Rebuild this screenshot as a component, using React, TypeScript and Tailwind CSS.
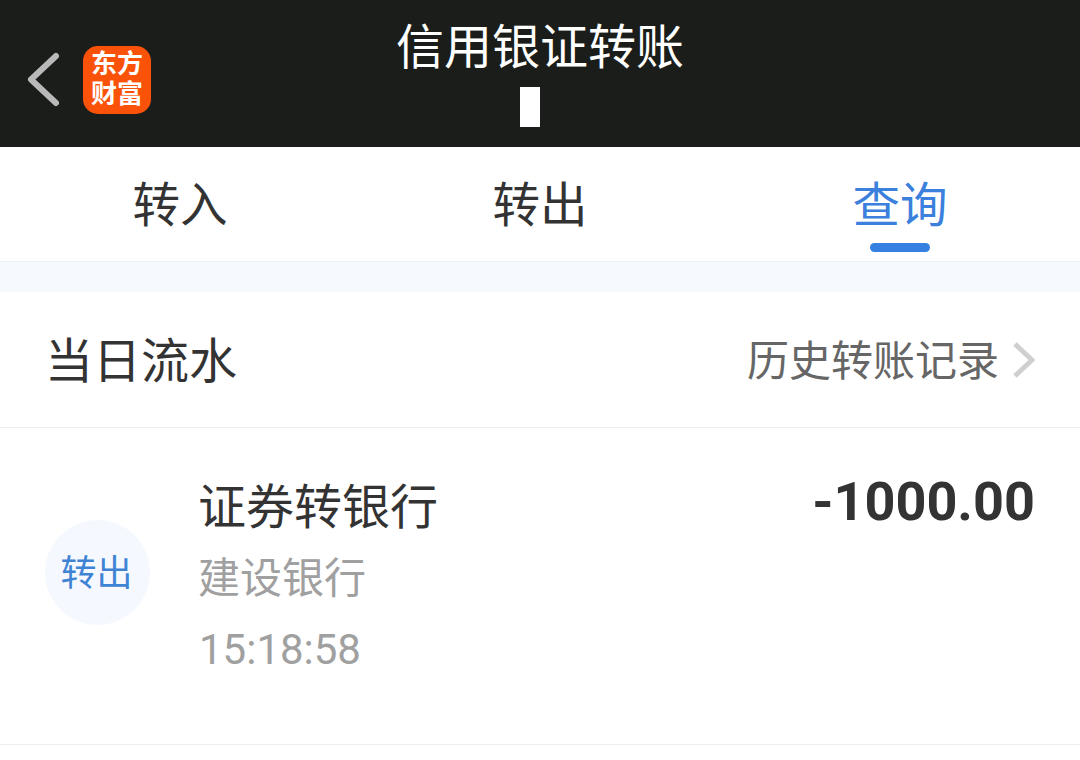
const cjk = "font-['Roboto','Noto_Sans_CJK_SC',sans-serif]"

export default function App() {
  return (
    <div className={`w-[1080px] h-[760px] overflow-hidden bg-white ${cjk}`}>
      <header className="h-[147px] bg-[#1a1d1a] grid grid-cols-[1fr_auto_1fr]">
        <div className="flex items-start pl-[27px] pt-[46px] gap-[23px]">
          <svg width="33" height="67" viewBox="0 0 33 67" fill="none">
            <path d="M29 10 L4 33.5 L29 57" stroke="#b9b9b9" strokeWidth="6" strokeLinecap="round" strokeLinejoin="round" />
          </svg>
          <div className="w-[68px] h-[68px] rounded-[15px] bg-[#fb5209] pt-[3px] text-center text-white font-bold text-[26px] leading-[30px] font-['Liberation_Sans','Noto_Sans_CJK_SC',serif]">
            <div>东方</div>
            <div>财富</div>
          </div>
        </div>
        <div className="flex flex-col items-center pt-[18px]">
          <h1 className="text-[48px] leading-[60px] text-white font-normal">信用银证转账</h1>
          <div className="w-[20px] h-[40px] bg-white mt-[9px] -translate-x-[10px]" />
        </div>
        <div />
      </header>

      <nav className="h-[115px] grid grid-cols-3 border-b border-[#eceff3]">
        {["转入", "转出", "查询"].map((t, i) => (
          <div key={t} className="relative flex justify-center pt-[29px]">
            <span className={`text-[47.5px] leading-[60px] ${i === 2 ? "text-[#3a80dc]" : "text-[#333333]"}`}>{t}</span>
            {i === 2 && <div className="absolute left-1/2 -translate-x-1/2 bottom-[9px] w-[60px] h-[9px] rounded-full bg-[#3580e0]" />}
          </div>
        ))}
      </nav>

      <div className="h-[30px] bg-[#f6f9fe]" />

      <div className="h-[136px] flex items-center justify-between pl-[45px] pr-[45px] border-b border-[#eeeeee]">
        <span className="text-[48px] leading-[60px] text-[#333333] translate-y-[2px]">当日流水</span>
        <div className="flex items-center gap-[14px]">
          <span className="text-[42px] leading-[56px] text-[#666666] translate-y-[2px]">历史转账记录</span>
          <svg width="22" height="36" viewBox="0 0 22 36" fill="none">
            <path d="M2 2 L19 18 L2 34" stroke="#cfcfcf" strokeWidth="5" />
          </svg>
        </div>
      </div>

      <div className="h-[317px] flex items-start pl-[45px] pr-[45px] border-b border-[#eeeeee]">
        <div className="w-[105px] h-[105px] mt-[92px] rounded-full bg-[#f5f9ff] flex items-center justify-center text-[36px] leading-none text-[#3f84d4]">
          <span className="-translate-x-[1px] translate-y-[1px]">转出</span>
        </div>
        <div className="ml-[49px] pt-[44px] flex flex-col">
          <span className="text-[48px] leading-[64px] text-[#333333] -translate-x-[1px] translate-y-[4px]">证券转银行</span>
          <span className="text-[42px] leading-[56px] text-[#a0a0a0] mt-[14px] -translate-x-[1px] translate-y-[1px]">建设银行</span>
          <span className="text-[42px] leading-[56px] text-[#a0a0a0] mt-[16px]">15:18:58</span>
        </div>
        <span className="ml-auto pt-[42px] text-[54px] leading-[64px] font-bold text-[#333333]">-1000.00</span>
      </div>
    </div>
  )
}
